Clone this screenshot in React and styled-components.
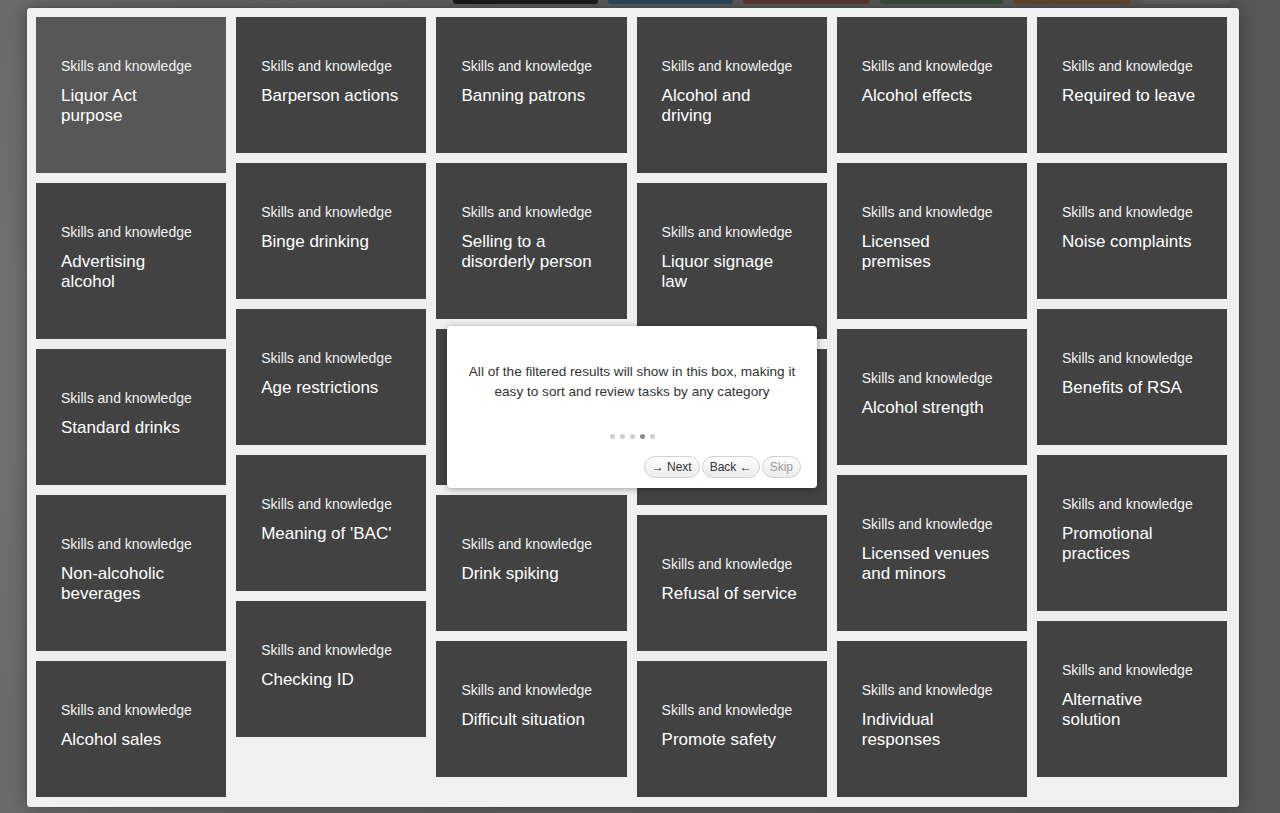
import React from 'react';
import styled, { createGlobalStyle } from 'styled-components';

const GlobalStyle = createGlobalStyle`
    html, body {
        margin: 0;
        padding: 0;
        height: 100%;
    }
    body {
        font-family: "Liberation Sans", Arial, Helvetica, sans-serif;
        background: #5c5c5c;
        overflow: hidden;
    }
`;

const LABEL = 'Skills and knowledge';

// each column is a list of cards, title split into its lines
// (the two "blank" ones sit under the tour box, so nothing shows)
const columns = [
    [
        { lines: ['Liquor Act', 'purpose'], active: true },
        { lines: ['Advertising', 'alcohol'] },
        { lines: ['Standard drinks'] },
        { lines: ['Non-alcoholic', 'beverages'] },
        { lines: ['Alcohol sales'] },
    ],
    [
        { lines: ['Barperson actions'] },
        { lines: ['Binge drinking'] },
        { lines: ['Age restrictions'] },
        { lines: ["Meaning of 'BAC'"] },
        { lines: ['Checking ID'] },
    ],
    [
        { lines: ['Banning patrons'] },
        { lines: ['Selling to a', 'disorderly person'] },
        { blank: 156 },
        { lines: ['Drink spiking'] },
        { lines: ['Difficult situation'] },
    ],
    [
        { lines: ['Alcohol and', 'driving'] },
        { lines: ['Liquor signage', 'law'] },
        { blank: 156 },
        { lines: ['Refusal of service'] },
        { lines: ['Promote safety'] },
    ],
    [
        { lines: ['Alcohol effects'] },
        { lines: ['Licensed', 'premises'] },
        { lines: ['Alcohol strength'] },
        { lines: ['Licensed venues', 'and minors'] },
        { lines: ['Individual', 'responses'] },
    ],
    [
        { lines: ['Required to leave'] },
        { lines: ['Noise complaints'] },
        { lines: ['Benefits of RSA'] },
        { lines: ['Promotional', 'practices'] },
        { lines: ['Alternative', 'solution'] },
    ],
];

const tabs = [
    { color: '#1c1c1c', width: 145 },
    { color: '#2f4a5c', width: 125 },
    { color: '#5d3838', width: 127 },
    { color: '#394d3c', width: 123 },
    { color: '#66482e', width: 118 },
    { color: '#616161', width: 89 },
];

const TourDots = [false, false, false, true, false];

const App = () => {
    return (
        <>
            <GlobalStyle />
            <Page>
                <TabStrip>
                    {tabs.map((t, i) => (
                        <Tab key={i} $color={t.color} $width={t.width} />
                    ))}
                </TabStrip>
                <Panel>
                    <Grid>
                        {columns.map((col, ci) => (
                            <Column key={ci}>
                                {col.map((card, i) =>
                                    card.blank ? (
                                        <Card key={i} $height={card.blank} />
                                    ) : (
                                        <Card key={i} $active={card.active}>
                                            <CardLabel>{LABEL}</CardLabel>
                                            <CardTitle>
                                                {card.lines.map((l, li) => (
                                                    <span key={li}>{l}</span>
                                                ))}
                                            </CardTitle>
                                        </Card>
                                    )
                                )}
                            </Column>
                        ))}
                    </Grid>

                    <Tour>
                        <TourText>
                            All of the filtered results will show in this box, making it easy to sort and review tasks by any category
                        </TourText>
                        <Dots>
                            {TourDots.map((on, i) => (
                                <Dot key={i} $on={on} />
                            ))}
                        </Dots>
                        <TourButtons>
                            <TourButton>&#x2192; Next</TourButton>
                            <TourButton>Back &#x2190;</TourButton>
                            <TourButton $muted>Skip</TourButton>
                        </TourButtons>
                    </Tour>
                </Panel>
            </Page>
        </>
    );
};

const Page = styled.div`
    width: 100vw;
    height: 100vh;
    box-sizing: border-box;
    padding-left: 27px;
    background:
        radial-gradient(ellipse at 25% 45%, rgba(255, 255, 255, 0.06), rgba(0, 0, 0, 0) 60%),
        linear-gradient(to right, #6b6b6b 0%, #5e5e5e 40%, #575757 100%);
`;

const TabStrip = styled.div`
    display: flex;
    gap: 10px;
    height: 4px;
    margin-left: 426px;
    margin-bottom: 4px;
`;

const Tab = styled.div`
    width: ${p => p.$width}px;
    height: 4px;
    background: ${p => p.$color};
    border-radius: 0 0 3px 3px;
`;

const Panel = styled.div`
    position: relative;
    width: 1212px;
    height: 799px;
    box-sizing: border-box;
    padding: 9px 10px 10px 9px;
    background: #f0f0f0;
    border-radius: 3px;
    box-shadow: 0 0 18px rgba(0, 0, 0, 0.35), 0 0 1px rgba(0, 0, 0, 0.5);
`;

const Grid = styled.div`
    display: flex;
    gap: 10px;
    align-items: flex-start;
`;

const Column = styled.div`
    display: flex;
    flex-direction: column;
    gap: 10px;
    width: 190.2px;
`;

const Card = styled.div`
    box-sizing: border-box;
    width: 100%;
    height: ${p => (p.$height ? `${p.$height}px` : 'auto')};
    padding: 40px 20px 47px 25px;
    background: ${p => (p.$active ? '#575757' : '#424242')};
    color: #fff;
`;

const CardLabel = styled.div`
    font-size: 14px;
    line-height: 18px;
    color: #f2f2f2;
    white-space: nowrap;
`;

const CardTitle = styled.div`
    margin-top: 11px;
    font-size: 17px;
    line-height: 20px;
    color: #fff;
    > span {
        display: block;
        white-space: nowrap;
    }
`;

const Tour = styled.div`
    position: absolute;
    left: 420px;
    top: 318px;
    width: 370px;
    box-sizing: border-box;
    padding: 36px 16px 10px 16px;
    background: #fff;
    border-radius: 4px;
    box-shadow: 0 1px 7px rgba(0, 0, 0, 0.35);
    display: flex;
    flex-direction: column;
`;

const TourText = styled.p`
    margin: 0;
    font-size: 13.6px;
    line-height: 20px;
    color: #333;
    text-align: center;
`;

const Dots = styled.div`
    display: flex;
    justify-content: center;
    gap: 5px;
    margin-top: 32px;
`;

const Dot = styled.span`
    width: 5px;
    height: 5px;
    border-radius: 50%;
    background: ${p => (p.$on ? '#8a8a8a' : '#d0d0d0')};
`;

const TourButtons = styled.div`
    display: flex;
    justify-content: flex-end;
    gap: 2px;
    margin-top: 17px;
`;

const TourButton = styled.button`
    height: 22px;
    padding: 0 7px;
    font-family: "Liberation Sans", Arial, sans-serif;
    font-size: 12px;
    color: ${p => (p.$muted ? '#9a9a9a' : '#333')};
    background: linear-gradient(#fdfdfd, #ececec);
    border: 1px solid #d2d2d2;
    border-radius: 11px;
    cursor: pointer;
`;

export default App;
